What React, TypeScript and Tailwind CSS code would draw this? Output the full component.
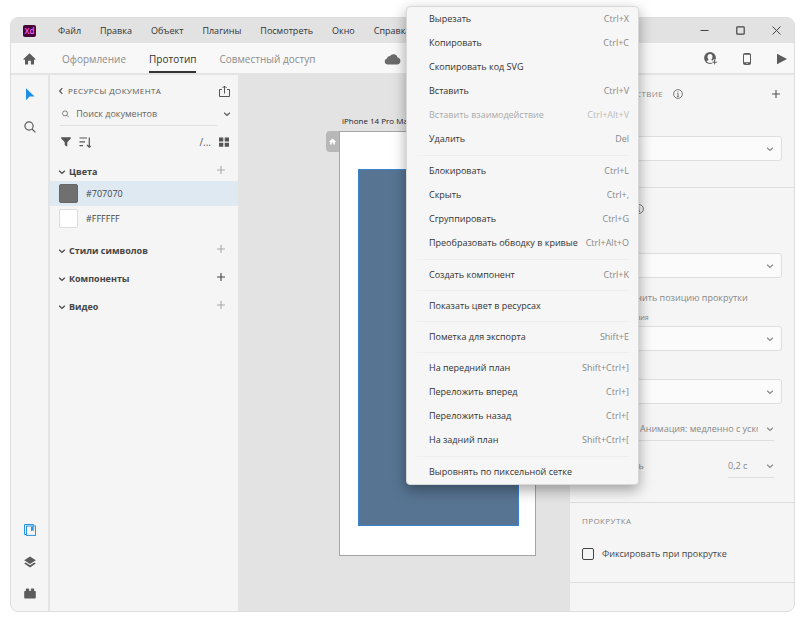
import React, { useState } from 'react';
import clsx from 'clsx';

type MenuEntry = {
  label: string;
  keys?: string;
  disabled?: boolean;
};

const menuBar = ['Файл', 'Правка', 'Объект', 'Плагины', 'Посмотреть', 'Окно', 'Справка'];

const tabs = ['Оформление', 'Прототип', 'Совместный доступ'];

const contextMenu: MenuEntry[][] = [
  [
    { label: 'Вырезать', keys: 'Ctrl+X' },
    { label: 'Копировать', keys: 'Ctrl+C' },
    { label: 'Скопировать код SVG' },
    { label: 'Вставить', keys: 'Ctrl+V' },
    { label: 'Вставить взаимодействие', keys: 'Ctrl+Alt+V', disabled: true },
    { label: 'Удалить', keys: 'Del' },
  ],
  [
    { label: 'Блокировать', keys: 'Ctrl+L' },
    { label: 'Скрыть', keys: 'Ctrl+,' },
    { label: 'Сгруппировать', keys: 'Ctrl+G' },
    { label: 'Преобразовать обводку в кривые', keys: 'Ctrl+Alt+O' },
  ],
  [{ label: 'Создать компонент', keys: 'Ctrl+K' }],
  [{ label: 'Показать цвет в ресурсах' }],
  [{ label: 'Пометка для экспорта', keys: 'Shift+E' }],
  [
    { label: 'На передний план', keys: 'Shift+Ctrl+]' },
    { label: 'Переложить вперед', keys: 'Ctrl+]' },
    { label: 'Переложить назад', keys: 'Ctrl+[' },
    { label: 'На задний план', keys: 'Shift+Ctrl+[' },
  ],
  [{ label: 'Выровнять по пиксельной сетке' }],
];

const colors = [
  { hex: '#707070', swatch: 'bg-[#707070] border-[#666]' },
  { hex: '#FFFFFF', swatch: 'bg-white border-[#dcdcdc]' },
];

// Icons

const Chevron: React.FC<{ className?: string }> = ({ className }) => (
  <svg viewBox="0 0 8 8" className={clsx('h-2 w-2 shrink-0', className)} fill="none" stroke="currentColor" strokeWidth="1.2">
    <path d="M1.200 2.700 4 5.400 6.800 2.700" />
  </svg>
);

const Plus: React.FC<{ className?: string }> = ({ className }) => (
  <svg viewBox="0 0 8 8" className={clsx('h-2 w-2', className)} fill="none" stroke="currentColor" strokeWidth="1.1">
    <path d="M4 0v8M0 4h8" />
  </svg>
);

const HomeIcon: React.FC<{ className?: string }> = ({ className }) => (
  <svg viewBox="0 0 13 12" className={className} fill="currentColor">
    <path d="M6.5.3 12.8 6.2 11.9 7 11 6.3V11.6H7.9V7.8H5.1V11.6H2V6.3L1.1 7 .2 6.2Z" />
  </svg>
);

const SearchIcon: React.FC<{ className?: string }> = ({ className }) => (
  <svg viewBox="0 0 12 12" className={className} fill="none" stroke="currentColor" strokeWidth="1.2">
    <circle cx="5" cy="5" r="4.1" />
    <path d="m8 8 3.4 3.4" />
  </svg>
);

const InfoIcon: React.FC = () => (
  <svg viewBox="0 0 10 10" className="h-2.5 w-2.5 shrink-0 text-[#777]" fill="none" stroke="currentColor" strokeWidth="1">
    <circle cx="5" cy="5" r="4.4" />
    <path d="M5 4.4V7.4M4 7.4h2M4.2 4.5H5M5 2.4v1" />
  </svg>
);

const TitleBar: React.FC = () => (
  <header className="flex h-[25px] items-center justify-between bg-[#e2e2e2] pl-3 pr-[13px]">
    <div className="flex items-center">
      <span className="mr-[22px] flex h-3 w-[13px] items-center justify-center rounded-[2px] bg-[#470137] text-[8px] font-semibold leading-3 text-[#ff61f6]">
        Xd
      </span>
      <nav className="flex gap-[19px]">
        {menuBar.map((item) => (
          <button key={item} className="text-[9px] leading-4 text-[#333]">
            {item}
          </button>
        ))}
      </nav>
    </div>
    <div className="flex items-center gap-[27px] text-[#444]">
      <button aria-label="Свернуть">
        <svg viewBox="0 0 9 9" className="h-[9px] w-[9px]" stroke="currentColor">
          <path d="M0.500 4.500h8" />
        </svg>
      </button>
      <button aria-label="Развернуть">
        <svg viewBox="0 0 9 9" className="h-[9px] w-[9px]" fill="none" stroke="currentColor" strokeWidth="1.2">
          <rect x=".8" y=".8" width="7.400" height="7.400" rx=".8" />
        </svg>
      </button>
      <button aria-label="Закрыть">
        <svg viewBox="0 0 9 9" className="h-[9px] w-[9px]" stroke="currentColor">
          <path d="m.5.5 8 8m0-8-8 8" />
        </svg>
      </button>
    </div>
  </header>
);

const ModeBar: React.FC = () => {
  const [mode, setMode] = useState('Прототип');

  return (
    <div className="flex h-8 items-center justify-between border-b-2 border-[#e4e4e4] bg-[#f8f8f8] pl-3 pr-[7px] pt-px text-[#5c5c5c]">
      <div className="flex h-full items-center">
        <button aria-label="Главная" className="mr-[26px]">
          <HomeIcon className="h-3 w-[13px]" />
        </button>
        <div className="flex h-full gap-[23px]">
          {tabs.map((tab) => (
            <button
              key={tab}
              onClick={() => setMode(tab)}
              className={clsx(
                'border-b-2 pt-0.5 text-[10px] leading-4',
                mode === tab ? 'border-[#333] text-[#333]' : 'border-transparent text-[#8c8c8c]'
              )}
            >
              {tab}
            </button>
          ))}
        </div>
        <svg viewBox="0 0 17 12" className="ml-[69px] h-3 w-[17px]" fill="#6b6b6b">
          <path d="M3.500 11.500a3 3 0 0 1-.6-5.900A3 3 0 0 1 6 3.100 4.200 4.200 0 0 1 13.600 4.600a3.500 3.500 0 0 1-.1 6.900Z" />
        </svg>
      </div>
      <div className="flex items-center gap-[26px]">
        <button aria-label="Пригласить">
          <svg viewBox="0 0 13 13" className="h-[13px] w-[13px]" fill="currentColor">
            <circle cx="6" cy="6" r="5.900" />
            <path
              d="M6 2C4.300 2 3.500 3.200 3.500 4.700c0 1.300.5 2.200 1.100 2.800.1.600-.3.900-2.200 1.500C3.300 10.200 4.500 10.900 6 10.900S8.700 10.200 9.600 9C7.700 8.400 7.300 8.100 7.400 7.500c.6-.6 1.100-1.500 1.100-2.800C8.500 3.200 7.700 2 6 2Z"
              fill="#f8f8f8"
            />
            <path d="M7.700 10.200h5.300M10.500 7.600v5.400" stroke="#f8f8f8" strokeWidth="2.800" />
            <path d="M8.400 10.200h4.400M10.600 8v4.400" stroke="currentColor" />
          </svg>
        </button>
        <button aria-label="Просмотр на устройстве">
          <svg viewBox="0 0 8 12" className="h-3 w-2" fill="none" stroke="currentColor">
            <rect x=".5" y=".5" width="7" height="11" rx="1" />
            <path d="M.5 1.300h7M.5 9.700h7M.5 10.500h2.800M4.700 10.500h2.800" />
          </svg>
        </button>
        <button aria-label="Просмотр">
          <svg viewBox="0 0 10 12" className="h-3 w-2.5" fill="currentColor">
            <path d="M0 .8 10 6 0 11.200Z" />
          </svg>
        </button>
      </div>
    </div>
  );
};

const ToolRail: React.FC = () => (
  <aside className="flex w-[39px] shrink-0 flex-col items-center justify-between border-r-2 border-[#e4e4e4] pb-3 pt-[13px] text-[#5c5c5c]">
    <div className="flex flex-col items-center gap-5">
      <button aria-label="Выделение">
        <svg viewBox="0 0 10 13" className="h-[13px] w-2.5" fill="#1e8fe8">
          <path d="M1 .3 9.600 8.400H4.700L1 12.300Z" />
        </svg>
      </button>
      <button aria-label="Масштаб">
        <SearchIcon className="h-3 w-3" />
      </button>
    </div>
    <div className="flex flex-col items-center gap-5">
      <button aria-label="Ресурсы">
        <svg viewBox="0 0 12 12" className="h-3 w-3" fill="none" stroke="#2a93e2">
          <path d="M2.500 10.500h-2V.5h9v1.500" />
          <rect x="2.500" y="2" width="9" height="9.400" />
          <path d="M7 2.500h2.700v5L8.350 6.300 7 7.500Z" fill="#2a93e2" stroke="none" />
        </svg>
      </button>
      <button aria-label="Слои">
        <svg viewBox="0 0 12 12" className="h-3 w-3" fill="currentColor">
          <path d="M6 .6 11.800 4.300 6 8 .2 4.300Z" />
          <path d="M1.700 6.500 6 9.200l4.300-2.700 1.500 1L6 11.400.2 7.500Z" />
        </svg>
      </button>
      <button aria-label="Плагины">
        <svg viewBox="0 0 12 11" className="h-[11px] w-3" fill="currentColor">
          <path d="M1 3h.8V1.300c0-.6.300-.9.900-.9h1.600c.6 0 .9.300.9.900V3h1.600V1.300c0-.6.300-.9.900-.9h1.600c.6 0 .9.300.9.900V3H11c.5 0 .8.300.8.800v6c0 .5-.3.800-.8.800H1c-.5 0-.8-.3-.8-.8v-6C.2 3.300.5 3 1 3Z" />
        </svg>
      </button>
    </div>
  </aside>
);

const SectionHeader: React.FC<{ title: string; active?: boolean }> = ({ title, active }) => (
  <div className="flex h-7 items-center justify-between pl-2 pr-[13px]">
    <h3 className="flex items-center gap-[3px] text-[9px] font-bold leading-4 text-[#444]">
      <Chevron />
      {title}
    </h3>
    <button aria-label={`Добавить: ${title}`} className={clsx('mb-1', active ? 'text-[#444]' : 'text-[#aaa]')}>
      <Plus />
    </button>
  </div>
);

const AssetsPanel: React.FC = () => {
  const [selected, setSelected] = useState('#707070');

  return (
    <aside className="w-[189px] shrink-0 border-r border-[#e4e4e4] pt-2 text-[#555]">
      <div className="flex h-4 items-center justify-between pl-[7px] pr-2">
        <h2 className="flex items-center gap-[3px] text-[8px] leading-4 tracking-wider">
          <Chevron className="rotate-90" />
          РЕСУРСЫ ДОКУМЕНТА
        </h2>
        <button aria-label="Опубликовать">
          <svg viewBox="0 0 11 12" className="h-3 w-[11px]" fill="none" stroke="currentColor">
            <path d="M3 4.500H.5v7h10v-7H8M5.500 8.500V1M3.500 3l2-2 2 2" />
          </svg>
        </button>
      </div>
      <div className="mt-[3px] flex h-6 items-center justify-between pr-[7px]">
        <label className="ml-2.5 flex h-full w-[157px] items-center gap-[7px] border-b border-[#e0e0e0] pl-0.5">
          <SearchIcon className="h-2 w-2" />
          <input
            type="text"
            aria-label="Поиск документов"
            placeholder="Поиск документов"
            className="w-full bg-transparent text-[9px] leading-4 outline-none placeholder:text-[#666]"
          />
        </label>
        <Chevron />
      </div>
      <div className="flex h-8 items-center justify-between pl-[11px] pr-[9px]">
        <div className="flex items-center gap-2">
          <button aria-label="Фильтр">
            <svg viewBox="0 0 10 10" className="h-2.5 w-2.5" fill="currentColor">
              <path d="M.2.300h9.600v1.200L6.300 5.300v4.400L3.700 8V5.300L.2 1.500Z" />
            </svg>
          </button>
          <button aria-label="Сортировка">
            <svg viewBox="0 0 12 11" className="h-[11px] w-3" fill="none" stroke="currentColor" strokeWidth="1.200">
              <path d="M.5 1h7.500M.5 4.800h5.500M.5 8.600h3.500M10.300.5v9.700M8 8l2.300 2.200L11.600 9" />
            </svg>
          </button>
        </div>
        <div className="flex items-center gap-2">
          <button aria-label="Путь" className="text-[10px] leading-4">
            /...
          </button>
          <button aria-label="Сетка">
            <svg viewBox="0 0 10 10" className="h-2.5 w-2.5" fill="currentColor">
              <path d="M0 .5h4.300v3.900H0zM5.700.5H10v3.900H5.700zM0 5.800h4.300v3.900H0zM5.700 5.800H10v3.900H5.700z" />
            </svg>
          </button>
        </div>
      </div>
      <section className="pb-1.5">
        <SectionHeader title="Цвета" />
        <div className="-mt-[5px]">
          {colors.map((color) => (
            <button
              key={color.hex}
              onClick={() => setSelected(color.hex)}
              className={clsx(
                'flex h-[25px] w-full items-center gap-2 pl-[9px] text-[9px] leading-4 text-[#444]',
                selected === color.hex && 'bg-[#dfe9f2]'
              )}
            >
              <span className={clsx('h-[19px] w-[19px] rounded-[2px] border', color.swatch)} />
              {color.hex}
            </button>
          ))}
        </div>
      </section>
      <SectionHeader title="Стили символов" />
      <SectionHeader title="Компоненты" active />
      <SectionHeader title="Видео" />
    </aside>
  );
};

const Canvas: React.FC = () => (
  <main className="min-w-0 flex-1 bg-[#e3e3e3] pl-[87px] pt-[38px]">
    <p className="pl-4 text-[8px] leading-4 text-[#222]">iPhone 14 Pro Max – 1</p>
    <div className="mt-0.5 flex items-start">
      <span className="flex h-[21px] w-[13px] items-center justify-center rounded-l bg-[#b8b8b8] text-white">
        <HomeIcon className="h-[7px] w-[7px]" />
      </span>
      <div className="h-[425px] w-[197px] border border-[#a5a5a5] bg-white pl-[18px] pr-4 pt-[37px]">
        <div className="h-[357px] border border-[#3b83cf] bg-[#577492]" />
      </div>
    </div>
  </main>
);

const Dropdown: React.FC<{ label: string; value: string }> = ({ label, value }) => (
  <label className="relative flex items-center">
    <select
      aria-label={label}
      className="h-[25px] w-full appearance-none rounded-[3px] border border-[#dedede] bg-[#fbfbfb] px-2 text-[9px] leading-4 text-[#666]"
    >
      <option>{value}</option>
    </select>
    <Chevron className="pointer-events-none absolute right-2" />
  </label>
);

const PropertyPanel: React.FC = () => (
  <aside className="w-[224px] shrink-0 text-[9px] leading-4 text-[#888]">
    <section className="h-[113px] border-b border-[#dedede] px-3 pt-[11px]">
      <div className="mb-[34px] flex h-4 items-center justify-between">
        <h2 className="flex items-center gap-2.5 text-[8px] tracking-wider">
          ВЗАИМОДЕЙСТВИЕ
          <InfoIcon />
        </h2>
        <button aria-label="Добавить взаимодействие" className="mr-0.5 text-[#555]">
          <Plus />
        </button>
      </div>
      <Dropdown label="Триггер" value="Касание" />
    </section>
    <section className="h-[315px] border-b border-[#dedede] px-3 pt-[13px]">
      <h2 className="flex items-center gap-2 text-[8px] leading-4 tracking-wider">
        ДЕЙСТВИЕ
        <InfoIcon />
      </h2>
      <div className="mt-9">
        <Dropdown label="Тип" value="Переход" />
      </div>
      <label className="mt-3 flex items-center gap-4">
        <input type="checkbox" className="h-3 w-3 shrink-0 appearance-none rounded-[2px] border border-[#aaa]" />
        <span className="whitespace-nowrap">Сохранить позицию прокрутки</span>
      </label>
      <p className="mt-1 pl-1 text-[7px] leading-4">Точка назначения</p>
      <Dropdown label="Точка назначения" value="Главная" />
      <div className="mt-7">
        <Dropdown label="Анимация" value="Нет" />
      </div>
      <label className="relative mr-2 mt-[13px] flex h-6 items-center border-b border-[#dedede] pl-[58px]">
        <select
          aria-label="Плавность"
          className="w-[118px] appearance-none overflow-hidden bg-transparent text-[9px] leading-4 outline-none"
        >
          <option>Анимация: медленно с ускорением</option>
        </select>
        <Chevron className="pointer-events-none absolute right-0" />
      </label>
      <div className="mr-2 mt-[13px] flex items-center justify-between">
        <span>Длительность</span>
        <label className="relative flex h-6 w-[46px] items-center border-b border-[#dedede]">
          <select aria-label="Длительность" className="w-full appearance-none bg-transparent text-[9px] leading-4 outline-none">
            <option>0,2 с</option>
          </select>
          <Chevron className="pointer-events-none absolute right-0" />
        </label>
      </div>
    </section>
    <section className="h-20 border-b border-[#dedede] px-3 pt-2.5">
      <h2 className="text-[8px] leading-4 tracking-wider">ПРОКРУТКА</h2>
      <label className="mt-[17px] flex items-center gap-2 text-[#444]">
        <input type="checkbox" className="h-3 w-3 appearance-none rounded-[2px] border border-[#444] checked:bg-[#444]" />
        Фиксировать при прокрутке
      </label>
    </section>
  </aside>
);

const ContextMenu: React.FC = () => (
  <div className="absolute left-[406px] top-1.5 w-[233px] divide-y divide-[#eeeeee] rounded border border-[#d8d8d8] bg-[#f6f6f6] pl-2.5 pr-[9px] shadow-[0_5px_14px_rgba(0,0,0,0.35)]">
    {contextMenu.map((group) => (
      <div
        key={group[0].label}
        className={clsx('pt-[3px] first:pt-0 last:pb-0', group.length > 1 ? 'pb-1' : 'pb-[3px]')}
      >
        {group.map((entry) => (
          <button
            key={entry.label}
            disabled={entry.disabled}
            className="flex h-6 w-full items-center justify-between whitespace-nowrap pl-3 text-[9px] leading-4 text-[#333] disabled:text-[#aaa]"
          >
            {entry.label}
            {entry.keys && <span className={entry.disabled ? 'text-[#bbb]' : 'text-[#888]'}>{entry.keys}</span>}
          </button>
        ))}
      </div>
    ))}
  </div>
);

const App: React.FC = () => (
  <div className="relative flex min-h-screen flex-col bg-white pb-[5px] pl-2.5 pr-[5px] pt-[17px] font-['Open_Sans','Noto_Sans',sans-serif]">
    <div className="flex flex-1 flex-col overflow-hidden rounded-lg border border-[#dedede] bg-[#f5f5f5]">
      <TitleBar />
      <ModeBar />
      <div className="flex flex-1">
        <ToolRail />
        <AssetsPanel />
        <Canvas />
        <PropertyPanel />
      </div>
    </div>
    <ContextMenu />
  </div>
);

export default App;
